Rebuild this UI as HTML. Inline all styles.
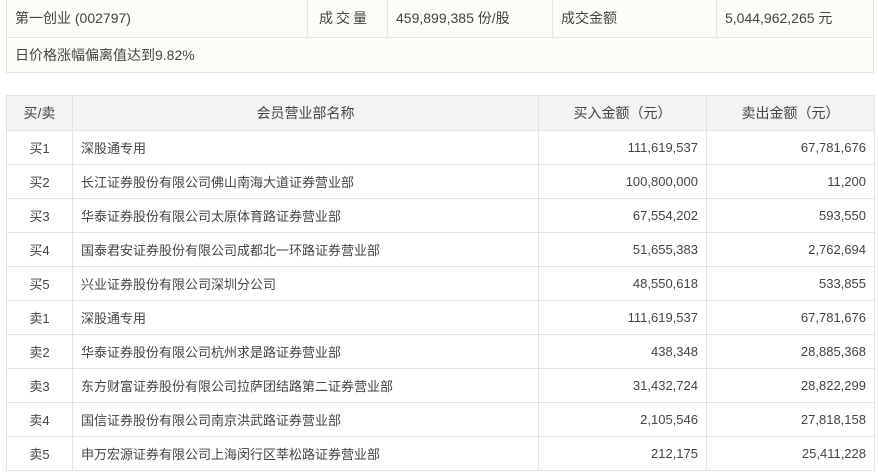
<!DOCTYPE html>
<html><head><meta charset="utf-8"><style>
body{margin:0;width:878px;height:476px;background:#fff;font-family:"Liberation Sans","Noto Sans CJK SC",sans-serif;font-size:13px;color:#444;overflow:hidden;position:relative}
.t1{position:absolute;left:6px;top:-1px;width:868px;height:74px;background:#fdfdf8;border:1px solid #e6e6e0;box-sizing:border-box;font-size:14px}
.c{position:absolute;top:0;height:37px;line-height:37px;border-right:1px solid #e6e6e0;box-sizing:border-box;padding-left:8px}
.r2{position:absolute;left:0;top:37px;width:100%;border-top:1px solid #e6e6e0;height:36px;line-height:34px;padding-left:8px;box-sizing:border-box}
table{position:absolute;left:6px;top:95px;width:868px;border-collapse:collapse;table-layout:fixed}
td,th{border:1px solid #e4e4e4;height:33px;padding:0 8px;font-weight:normal;white-space:nowrap}
th{background:#f3f3f3;height:34px;font-size:14px}
td:first-child{text-align:center}
td.n{text-align:right}
</style></head><body>
<div class="t1">
<div class="c" style="left:0;width:301px">第一创业 (002797)</div>
<div class="c" style="left:301px;width:80px;padding-left:11px;letter-spacing:3px">成交量</div>
<div class="c" style="left:381px;width:165px">459,899,385 份/股</div>
<div class="c" style="left:546px;width:164px">成交金额</div>
<div class="c" style="left:710px;width:158px;border-right:none">5,044,962,265 元</div>
<div class="r2">日价格涨幅偏离值达到9.82%</div>
</div>
<table>
<colgroup><col style="width:66px"><col style="width:466px"><col style="width:168px"><col style="width:168px"></colgroup>
<tr><th>买/卖</th><th>会员营业部名称</th><th>买入金额（元）</th><th>卖出金额（元）</th></tr>
<tr><td>买1</td><td>深股通专用</td><td class="n">111,619,537</td><td class="n">67,781,676</td></tr>
<tr><td>买2</td><td>长江证券股份有限公司佛山南海大道证券营业部</td><td class="n">100,800,000</td><td class="n">11,200</td></tr>
<tr><td>买3</td><td>华泰证券股份有限公司太原体育路证券营业部</td><td class="n">67,554,202</td><td class="n">593,550</td></tr>
<tr><td>买4</td><td>国泰君安证券股份有限公司成都北一环路证券营业部</td><td class="n">51,655,383</td><td class="n">2,762,694</td></tr>
<tr><td>买5</td><td>兴业证券股份有限公司深圳分公司</td><td class="n">48,550,618</td><td class="n">533,855</td></tr>
<tr><td>卖1</td><td>深股通专用</td><td class="n">111,619,537</td><td class="n">67,781,676</td></tr>
<tr><td>卖2</td><td>华泰证券股份有限公司杭州求是路证券营业部</td><td class="n">438,348</td><td class="n">28,885,368</td></tr>
<tr><td>卖3</td><td>东方财富证券股份有限公司拉萨团结路第二证券营业部</td><td class="n">31,432,724</td><td class="n">28,822,299</td></tr>
<tr><td>卖4</td><td>国信证券股份有限公司南京洪武路证券营业部</td><td class="n">2,105,546</td><td class="n">27,818,158</td></tr>
<tr><td>卖5</td><td>申万宏源证券有限公司上海闵行区莘松路证券营业部</td><td class="n">212,175</td><td class="n">25,411,228</td></tr>
</table>
</body></html>
